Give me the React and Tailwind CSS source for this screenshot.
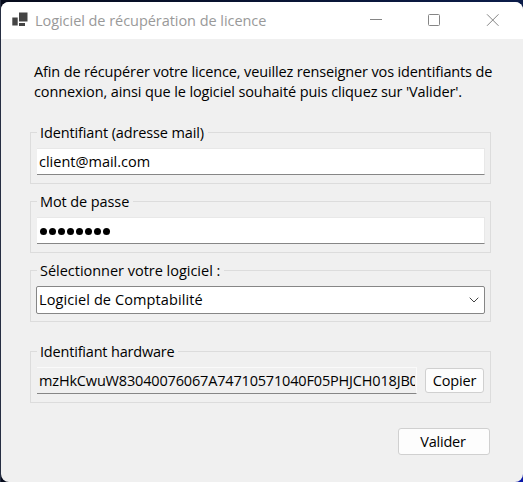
function Group({ label, labelClass, className, children }) {
  return (
    <section className={`mx-[29px] flex h-[52px] w-[461px] shrink-0 flex-col border border-[#dcdcdc] px-[5px] ${className}`}>
      <div className={`-mt-[10px] ml-px h-5 shrink-0 whitespace-nowrap bg-[#f0f0f0] pl-[3px] ${labelClass}`}>{label}</div>
      {children}
    </section>
  );
}

function TitleBar() {
  return (
    <header className="flex h-[37px] shrink-0 items-center bg-white text-[#999999]">
      <svg className="mb-[2px] ml-[11px] shrink-0" width="16" height="15" viewBox="0 0 16 15">
        <path fill="#444" d="M7 .5h8.500v9H7zM.3 5.500h5.400v8H.3zM7 11h6v3H7z" />
      </svg>
      <span className="ml-[7px] whitespace-nowrap tracking-[-0.05px]">Logiciel de récupération de licence</span>
      <svg className="mb-[3px] ml-auto mr-6 shrink-0" width="130" height="14" viewBox="0 0 130 14" fill="none" stroke="#858585">
        <path d="M1 7.500h12" />
        <rect x="59.500" y="2.500" width="11" height="11" rx="1" />
        <path d="M118 2.300l11.500 11.500m0-11.500l-11.500 11.500" />
      </svg>
    </header>
  );
}

export default function App() {
  return (
    <div className="h-[482px] w-[523px] overflow-hidden border-l border-[#262e42] bg-[linear-gradient(180deg,transparent_50%,#0a18a8_50%),linear-gradient(90deg,#060b1c,#0b1c49)] bg-[position:right_bottom,0_0] bg-[size:20px_40px,100%_100%] bg-no-repeat pt-[2px] font-['Open_Sans',sans-serif] text-[14.5px] leading-5 text-black">
      <main className="flex h-[480px] w-[522px] flex-col overflow-hidden rounded-[8px] bg-[#f0f0f0]">
        <TitleBar />
        <div className="ml-[33px] mt-[23px] h-10 whitespace-nowrap">
          <p className="w-fit tracking-[-0.14px]">Afin de récupérer votre licence, veuillez renseigner vos identifiants de</p>
          <p className="w-fit tracking-[-0.115px]">connexion, ainsi que le logiciel souhaité puis cliquez sur 'Valider'.</p>
        </div>
        <Group label="Identifiant (adresse mail)" labelClass="w-[171px] tracking-[-0.13px]" className="mt-[30px]">
          <div className="ml-px mt-[5px] flex h-[27px] w-[448px] items-center border-b border-r border-t border-b-[#868686] border-r-[#e8e8e8] border-t-[#e8e8e8] bg-white pl-[2px] pt-px">
            <span>client@mail.com</span>
          </div>
        </Group>
        <Group label="Mot de passe" labelClass="w-[96px] tracking-[-0.1px]" className="mt-[17px]">
          <div className="ml-px mt-[5px] flex h-[27px] w-[448px] items-center gap-[2px] border-b border-r border-t border-b-[#868686] border-r-[#e8e8e8] border-t-[#e8e8e8] bg-white pl-[3px] pt-[2px]">
            {Array.from({ length: 8 }, (_, i) => (
              <span key={i} className="size-[7px] rounded-full bg-black" />
            ))}
          </div>
        </Group>
        <Group label="Sélectionner votre logiciel :" labelClass="w-[187px] tracking-[-0.02px]" className="mt-[17px]">
          <div className="mt-[5px] flex h-[28px] w-[449px] items-center rounded-[2px] border border-[#868686] bg-white pl-[2px] pr-[5px]">
            <span className="tracking-[0.1px]">Logiciel de Comptabilité</span>
            <svg className="ml-auto" width="10" height="6" viewBox="0 0 10 6" fill="none" stroke="#444">
              <path d="M.7 .7L5 5 9.300 .7" />
            </svg>
          </div>
        </Group>
        <Group label="Identifiant hardware" labelClass="w-[141px] tracking-[-0.19px]" className="mt-[29px]">
          <div className="ml-px mt-[5px] flex">
            <div className="flex h-[27px] w-[380px] items-center border-b border-r border-t border-b-[#868686] border-r-[#fafafa] border-t-[#fafafa] pl-[2px] pt-px">
              <span className="w-[376px] overflow-hidden whitespace-nowrap tracking-[-0.17px]">mzHkCwuW83040076067A74710571040F05PHJCH018JB0</span>
            </div>
            <button className="ml-2 mt-px h-[25px] w-[59px] rounded-[3px] border border-[#d0d0d0] bg-[#fdfdfd] tracking-[-0.15px]">Copier</button>
          </div>
        </Group>
        <button className="ml-[397px] mt-[25px] h-[27px] w-[92px] rounded-[3px] border border-[#d0d0d0] bg-[#fdfdfd] pr-[2px] tracking-[-0.2px]">Valider</button>
      </main>
    </div>
  );
}
